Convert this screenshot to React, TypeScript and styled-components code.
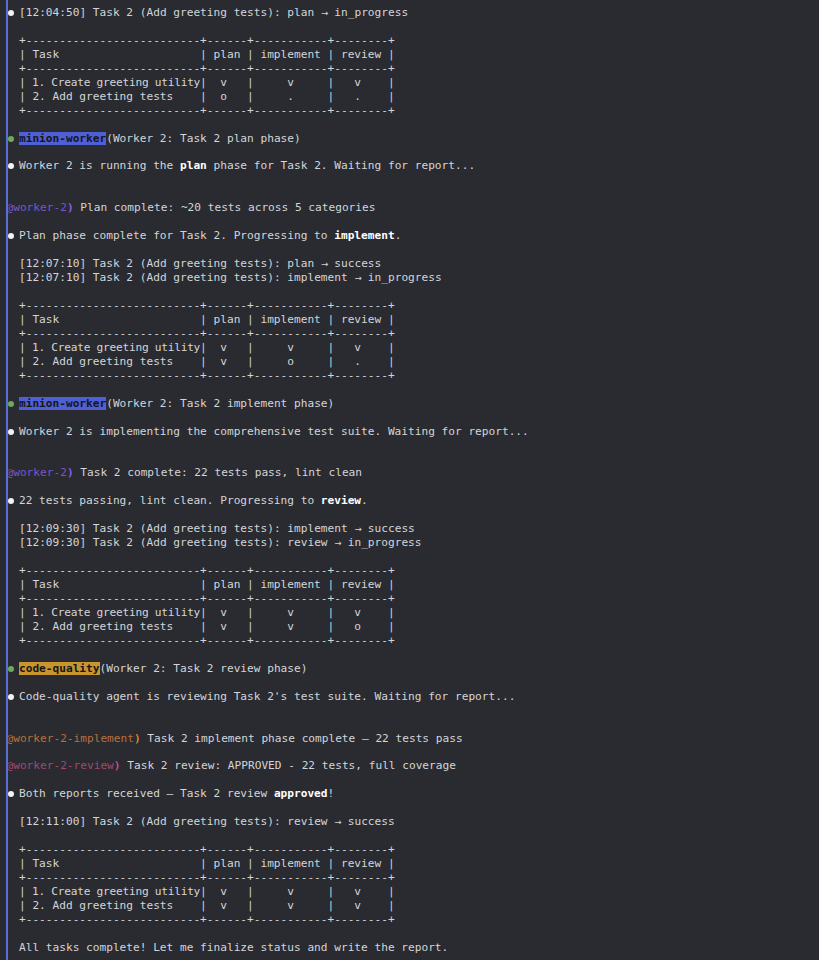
import React from "react";
import styled, { createGlobalStyle } from "styled-components";

const LINE = 13.955;
const CELL = 6.71;

const GlobalStyle = createGlobalStyle`
  html, body { margin: 0; padding: 0; background: #292b31; }
`;

const Transcript = styled.div`
  position: relative;
  min-height: 960px;
  box-sizing: border-box;
  padding-top: 6px;
  font-family: "DejaVu Sans Mono", "Liberation Mono", monospace;
  font-size: 11.15px;
  line-height: ${LINE}px;
  color: #d4d5d8;
  &::after {
    content: "";
    position: absolute;
    left: 6px;
    top: 0;
    bottom: 0;
    width: 2px;
    background: #5b6fd8;
  }
`;

const Block = styled.div<{ $gap: number }>`
  margin-top: ${(p) => p.$gap * LINE}px;
  white-space: pre;
`;

const BulletRow = styled(Block)`
  display: flex;
  align-items: flex-start;
  gap: 5px;
  padding-left: 8px;
`;

const Dot = styled.span<{ $color: string }>`
  flex: none;
  width: 6px;
  height: 6px;
  margin-top: 4px;
  border-radius: 50%;
  background: ${(p) => p.$color};
`;

const Plain = styled(Block)`
  padding-left: 19px;
`;

const Reply = styled(Block)`
  padding-left: 6.5px;
`;

const Strong = styled.b`
  font-weight: bold;
  color: #ffffff;
`;

const AgentTag = styled.span<{ $bg: string }>`
  background: ${(p) => p.$bg};
  color: #15161c;
  font-weight: bold;
`;

const Sender = styled.span<{ $color: string }>`
  color: ${(p) => p.$color};
`;

const SenderEnd = styled.span<{ $color: string }>`
  color: ${(p) => p.$color};
  font-weight: bold;
`;

const Squeeze = styled.span`
  letter-spacing: -0.24px;
`;

const ArrowGlyph = styled.span`
  display: inline-block;
  width: ${CELL}px;
  font-family: "DejaVu Sans", sans-serif;
  font-size: 8.6px;
  line-height: 1;
  text-align: center;
`;

const Arrow = () => <ArrowGlyph>→</ArrowGlyph>;

type Mark = "v" | "o" | ".";

const border = "+--------------------------+------+-----------+--------+";
const header = "| Task                     | plan | implement | review |";

const StatusTable = ({ gap, r1, r2 }: { gap: number; r1: Mark[]; r2: Mark[] }) => (
  <Plain $gap={gap}>
    {border + "\n" + header + "\n" + border + "\n"}
    <Squeeze>| 1. Create greeting utility</Squeeze>
    {`|  ${r1[0]}   |     ${r1[1]}     |   ${r1[2]}    |\n`}
    {`| 2. Add greeting tests    |  ${r2[0]}   |     ${r2[1]}     |   ${r2[2]}    |\n`}
    {border}
  </Plain>
);

const LogLine = ({ time, from, to }: { time: string; from: string; to: string }) => (
  <>
    [{time}] Task 2 (Add greeting tests): {from} <Arrow /> {to}
  </>
);

const WHITE = "#f2f2f2";
const GREEN = "#6aab5c";

const Bullet = ({ gap, color = WHITE, children }: { gap: number; color?: string; children: React.ReactNode }) => (
  <BulletRow $gap={gap}>
    <Dot $color={color} />
    <span>{children}</span>
  </BulletRow>
);

const PURPLE = "#7a55c8";
const PURPLE_B = "#8b5fe8";
const ORANGE = "#b8703c";
const ORANGE_B = "#d9822f";
const PINK = "#a4476f";
const PINK_B = "#c44d85";

export default function App() {
  return (
    <>
      <GlobalStyle />
      <Transcript>
        <Bullet gap={0}>
          <LogLine time="12:04:50" from="plan" to="in_progress" />
        </Bullet>
        <StatusTable gap={1} r1={["v", "v", "v"]} r2={["o", ".", "."]} />
        <Bullet gap={1} color={GREEN}>
          <AgentTag $bg="#4f5fd4">minion-worker</AgentTag>(Worker 2: Task 2 plan phase)
        </Bullet>
        <Bullet gap={1}>
          Worker 2 is running the <Strong>plan</Strong> phase for Task 2. Waiting for report...
        </Bullet>
        <Reply $gap={2}>
          <Sender $color={PURPLE}>@worker-2</Sender>
          <SenderEnd $color={PURPLE_B}>)</SenderEnd> Plan complete: ~20 tests across 5 categories
        </Reply>
        <Bullet gap={1}>
          Plan phase complete for Task 2. Progressing to <Strong>implement</Strong>.
        </Bullet>
        <Plain $gap={1}>
          <LogLine time="12:07:10" from="plan" to="success" />
          {"\n"}
          <LogLine time="12:07:10" from="implement" to="in_progress" />
        </Plain>
        <StatusTable gap={1} r1={["v", "v", "v"]} r2={["v", "o", "."]} />
        <Bullet gap={1} color={GREEN}>
          <AgentTag $bg="#4f5fd4">minion-worker</AgentTag>(Worker 2: Task 2 implement phase)
        </Bullet>
        <Bullet gap={1}>Worker 2 is implementing the comprehensive test suite. Waiting for report...</Bullet>
        <Reply $gap={2}>
          <Sender $color={PURPLE}>@worker-2</Sender>
          <SenderEnd $color={PURPLE_B}>)</SenderEnd> Task 2 complete: 22 tests pass, lint clean
        </Reply>
        <Bullet gap={1}>
          22 tests passing, lint clean. Progressing to <Strong>review</Strong>.
        </Bullet>
        <Plain $gap={1}>
          <LogLine time="12:09:30" from="implement" to="success" />
          {"\n"}
          <LogLine time="12:09:30" from="review" to="in_progress" />
        </Plain>
        <StatusTable gap={1} r1={["v", "v", "v"]} r2={["v", "v", "o"]} />
        <Bullet gap={1} color={GREEN}>
          <AgentTag $bg="#c8962c">code-quality</AgentTag>(Worker 2: Task 2 review phase)
        </Bullet>
        <Bullet gap={1}>Code-quality agent is reviewing Task 2's test suite. Waiting for report...</Bullet>
        <Reply $gap={2}>
          <Sender $color={ORANGE}>@worker-2-implement</Sender>
          <SenderEnd $color={ORANGE_B}>)</SenderEnd> Task 2 implement phase complete — 22 tests pass
        </Reply>
        <Reply $gap={1}>
          <Sender $color={PINK}>@worker-2-review</Sender>
          <SenderEnd $color={PINK_B}>)</SenderEnd> Task 2 review: APPROVED - 22 tests, full coverage
        </Reply>
        <Bullet gap={1}>
          Both reports received — Task 2 review <Strong>approved</Strong>!
        </Bullet>
        <Plain $gap={1}>
          <LogLine time="12:11:00" from="review" to="success" />
        </Plain>
        <StatusTable gap={1} r1={["v", "v", "v"]} r2={["v", "v", "v"]} />
        <Plain $gap={1}>All tasks complete! Let me finalize status and write the report.</Plain>
      </Transcript>
    </>
  );
}
